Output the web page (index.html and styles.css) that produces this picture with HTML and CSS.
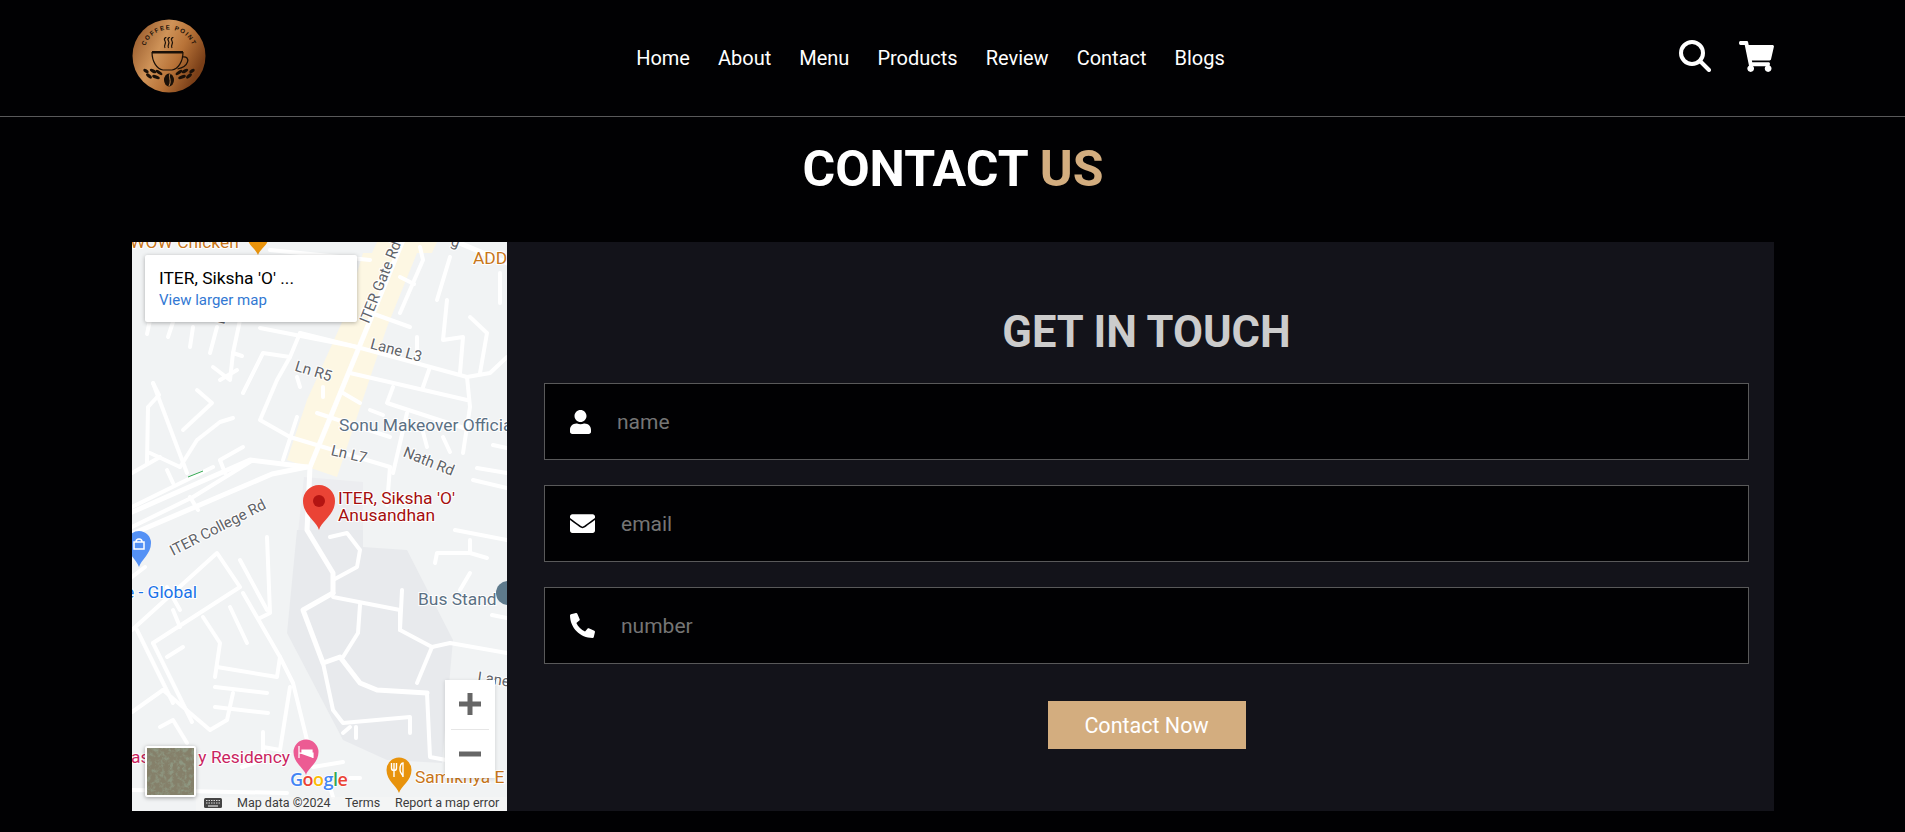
FILE: index.html
```html
<!DOCTYPE html>
<html lang="en">
<head>
<meta charset="utf-8">
<title>Coffee Point - Contact</title>
<link rel="stylesheet" href="styles.css">
</head>
<body>
<header class="site-header">
  <a class="logo" href="#" aria-label="Coffee Point">
    <svg class="logo-art" viewBox="0 0 74 74" width="74" height="74">
      <defs>
        <linearGradient id="copper" x1="0" y1="0" x2="1" y2="0.5">
          <stop offset="0" stop-color="#8a4d22"/>
          <stop offset="0.45" stop-color="#cf9358"/>
          <stop offset="0.7" stop-color="#b87338"/>
          <stop offset="1" stop-color="#7a3f18"/>
        </linearGradient>
        <path id="logoArc" d="M12 31 A25.500 25.500 0 0 1 62 31"/>
      </defs>
      <circle cx="37" cy="37" r="36.500" fill="url(#copper)"/>
      <text class="logo-text"><textPath href="#logoArc" startOffset="50%" text-anchor="middle">COFFEE POINT</textPath></text>
      <g class="logo-line">
        <path d="M33 29c-2-3 2-4 0-7s1-3 1-4M36.500 29c-2-3 2-4 0-7s1-3 1-4M40 29c-2-3 2-4 0-7s1-3 1-4"/>
        <path d="M20 33c0 10 5 17 11 18h9c6-1 11-8 11-18"/>
        <path d="M50 38c5-1 6.500 2 5.500 5s-5 6-10 7"/>
      </g>
      <path d="M20 32h31v2.500H20z" fill="#1a1008"/>
      <g fill="#1a1008">
        <ellipse cx="37" cy="61" rx="5" ry="6.500"/>
        <ellipse cx="14" cy="52" rx="3" ry="1.600" transform="rotate(30 14 52)"/>
        <ellipse cx="17" cy="57" rx="3.500" ry="1.600" transform="rotate(40 17 57)"/>
        <ellipse cx="21" cy="52" rx="3.500" ry="1.600" transform="rotate(30 21 52)"/>
        <ellipse cx="24" cy="58" rx="4" ry="1.700" transform="rotate(20 24 58)"/>
        <ellipse cx="27" cy="53.500" rx="4" ry="1.500" transform="rotate(35 27 53.500)"/>
        <ellipse cx="60" cy="52" rx="3" ry="1.600" transform="rotate(-30 60 52)"/>
        <ellipse cx="57" cy="57" rx="3.500" ry="1.600" transform="rotate(-40 57 57)"/>
        <ellipse cx="53" cy="52" rx="3.500" ry="1.600" transform="rotate(-30 53 52)"/>
        <ellipse cx="50" cy="58" rx="4" ry="1.700" transform="rotate(-20 50 58)"/>
        <ellipse cx="47" cy="53.500" rx="4" ry="1.500" transform="rotate(-35 47 53.500)"/>
      </g>
      <path d="M38 55c-2 3 2 6-1 12" fill="none" stroke="#c98a50" stroke-width="0.900"/>
    </svg>
  </a>
  <nav class="main-nav">
    <a href="#">Home</a>
    <a href="#">About</a>
    <a href="#">Menu</a>
    <a href="#">Products</a>
    <a href="#">Review</a>
    <a href="#">Contact</a>
    <a href="#">Blogs</a>
  </nav>
  <div class="header-icons">
    <svg class="icon-search" viewBox="0 0 32 32" width="32" height="32">
      <circle cx="13" cy="13" r="11" fill="none" stroke="#fff" stroke-width="4"/>
      <path d="M21 21l9 9" stroke="#fff" stroke-width="4" stroke-linecap="round"/>
    </svg>
    <svg class="icon-cart" viewBox="0 0 576 512" width="35" height="31">
      <path fill="#fff" d="M528.12 301.319l47.273-208C578.806 78.301 567.391 64 551.99 64H159.208l-9.166-44.81C147.758 8.021 137.93 0 126.529 0H24C10.745 0 0 10.745 0 24v16c0 13.255 10.745 24 24 24h69.883l70.248 343.435C147.325 417.1 136 435.222 136 456c0 30.928 25.072 56 56 56s56-25.072 56-56c0-15.674-6.447-29.835-16.824-40h209.647C430.447 426.165 424 440.326 424 456c0 30.928 25.072 56 56 56s56-25.072 56-56c0-22.172-12.888-41.332-31.579-50.405l5.517-24.276c3.413-15.018-8.002-29.319-23.403-29.319H218.117l-6.545-32h293.145c11.206 0 20.92-7.754 23.403-18.681z"/>
    </svg>
  </div>
</header>

<main class="contact">
  <h1 class="page-title">CONTACT <span class="accent">US</span></h1>
  <div class="contact-row">
    <div class="map">
      <svg class="map-art" viewBox="0 0 375 569" width="375" height="569">
        <rect class="m-bg" width="375" height="569"/>
        <polygon class="m-campus-light" points="172,235 231,240 231,310 165,300"/>
        <polygon class="m-campus" points="165,288 155,391 211,498 255,518 310,521 321,398 275,308 231,305 231,288"/>
        <polygon class="m-market" points="231,11 285,11 255,85 205,235 155,218 175,158 211,78"/>
        <polygon class="m-market" points="245,0 305,0 300,11 240,11"/>
        <g class="m-road">
          <polyline points="128,86 225,105 335,135"/>
          <polyline points="218,131 335,158"/>
          <polyline points="168,91 158,115 131,111 111,151"/>
          <polyline points="168,91 225,105"/>
          <polyline points="158,115 145,138 128,178 158,195 258,225"/>
          <polyline points="165,175 151,218"/>
          <polyline points="335,135 338,165 331,211"/>
          <polyline points="298,125 291,145"/>
          <polyline points="261,145 255,161 338,188"/>
          <polyline points="185,171 258,195"/>
          <polyline points="21,141 27,153 16,165 15,221"/>
          <polyline points="21,141 55,231"/>
          <polyline points="65,148 80,161 51,188"/>
          <polyline points="101,176 88,180 65,198 48,225"/>
          <polyline points="18,211 48,225"/>
          <polyline points="35,228 41,241"/>
          <polyline points="58,255 66,268"/>
          <polyline points="0,231 28,215"/>
          <polyline points="0,265 81,225"/>
          <polyline points="121,218 61,255 0,285"/>
          <polyline points="88,218 111,205"/>
          <polyline points="88,218 93,231"/>
          <polyline points="18,78 15,92"/>
          <polyline points="41,80 36,95"/>
          <polyline points="61,85 58,105"/>
          <polyline points="85,85 78,111"/>
          <polyline points="108,78 101,111 98,138 81,125"/>
          <polyline points="88,138 105,128"/>
          <polyline points="101,111 110,114"/>
          <polyline points="315,58 311,98 331,95 328,131"/>
          <polyline points="338,75 355,91 348,131"/>
          <polyline points="375,115 358,131 335,135"/>
          <polyline points="288,5 291,18 268,71"/>
          <polyline points="318,15 305,58"/>
          <polyline points="368,31 368,61"/>
          <polyline points="138,8 238,18"/>
          <polyline points="231,68 278,85"/>
          <polyline points="268,35 282,42"/>
          <polyline points="165,135 168,145"/>
          <polyline points="191,145 191,155"/>
          <polyline points="211,151 228,161"/>
          <polyline points="285,95 285,115"/>
          <polyline points="238,168 251,173"/>
          <polyline points="291,190 295,205"/>
          <polyline points="311,195 318,210"/>
          <polyline points="258,225 255,263"/>
          <polyline points="275,171 261,231"/>
          <polyline points="345,226 375,231"/>
          <polyline points="341,238 375,246"/>
          <polyline points="361,203 375,206"/>
          <polyline points="323,288 375,298"/>
          <polyline points="338,298 338,311 305,311 303,321"/>
          <polyline points="338,311 355,316"/>
          <polyline points="338,331 328,348"/>
          <polyline points="360,373 375,376"/>
          <polyline points="135,295 138,371 128,376"/>
          <polyline points="108,318 135,368"/>
          <polyline points="0,388 85,311 108,345 21,401"/>
          <polyline points="13,325 0,335"/>
          <polyline points="35,345 48,368"/>
          <polyline points="98,365 115,401"/>
          <polyline points="71,375 88,401 83,435"/>
          <polyline points="85,425 145,435 148,415"/>
          <polyline points="111,351 148,415 161,441 175,498"/>
          <polyline points="158,445 148,508"/>
          <polyline points="83,445 135,451"/>
          <polyline points="83,465 136,471"/>
          <polyline points="101,451 95,478 78,488 31,448"/>
          <polyline points="5,388 41,461"/>
          <polyline points="21,401 60,480"/>
          <polyline points="35,415 51,405"/>
          <polyline points="41,368 48,385"/>
          <polyline points="28,485 41,478 55,501"/>
          <polyline points="0,470 31,448"/>
          <polyline points="110,525 131,518 131,490"/>
          <polyline points="131,505 148,508"/>
          <polyline points="181,525 211,520"/>
          <polyline points="198,545 201,555"/>
          <polyline points="218,536 228,536"/>
          <polyline points="0,548 155,551"/>
          <polyline points="201,355 268,368 268,388 300,405 285,441"/>
          <polyline points="270,348 268,388"/>
          <polyline points="228,363 226,391 211,415"/>
          <polyline points="300,405 318,401 375,411"/>
          <polyline points="198,295 215,291 228,308 225,325 201,338"/>
          <polyline points="191,421 201,468 211,481 278,475 278,491"/>
          <polyline points="218,485 211,491"/>
          <polyline points="224,485 224,496"/>
          <polyline points="295,451 298,515 325,520"/>
        </g>
        <g class="m-road-wide">
          <polyline points="271,-2 178,225 175,288 201,331 201,351"/>
          <polyline points="325,0 375,21"/>
          <polyline points="-2,271 118,218 175,225"/>
          <polyline points="0,292 140,232 175,225"/>
          <polyline points="201,351 171,368 191,421 208,415 228,441 245,448 295,451"/>
        </g>
        <path class="m-green" d="M56 235l15-6"/>

        <text class="t-poi-orange" x="-2" y="6">WOW Chicken</text>
        <text class="t-poi-orange" x="341" y="22">ADD</text>
        <text class="t-road" transform="translate(253 42) rotate(-68)" text-anchor="middle">ITER Gate Rd</text>
        <text class="t-road" transform="translate(263 113) rotate(15)" text-anchor="middle">Lane L3</text>
        <text class="t-road" transform="translate(180 134) rotate(17)" text-anchor="middle">Ln R5</text>
        <text class="t-road" transform="translate(216 217) rotate(13)" text-anchor="middle">Ln L7</text>
        <text class="t-road" transform="translate(295 224) rotate(22)" text-anchor="middle">Nath Rd</text>
        <text class="t-road" transform="translate(88 290) rotate(-27)" text-anchor="middle">ITER College Rd</text>
        <text class="t-road" transform="translate(318 3) rotate(20)">g</text>
        <text class="t-road" transform="translate(92 83) rotate(-75)">L</text>
        <text class="t-road" transform="translate(345 440) rotate(8)">Lane</text>
        <text class="t-place" x="207" y="189">Sonu Makeover Official</text>
        <text class="t-place" x="286" y="363">Bus Stand</text>
        <text class="t-blue" x="65" y="356" text-anchor="end">e - Global</text>
        <text class="t-pink" x="-1" y="521">as</text>
        <text class="t-pink" x="158" y="521" text-anchor="end">y Residency</text>
        <text class="t-poi-orange" x="283" y="541">Samikhya E</text>
        <text class="t-red" x="206" y="262">ITER, Siksha 'O'</text>
        <text class="t-red" x="206" y="279">Anusandhan</text>

        <path class="pin-orange" d="M126 13c-2-6-10-10-10-16a10 10 0 0 1 20 0c0 6-8 10-10 16z"/>
        <path class="pin-blue" d="M7 325c-2-7-12-13-12-24a12 12 0 0 1 24 0c0 11-10 17-12 24z"/>
        <path d="M2 300h10v7H2zM4 300a3 3 0 0 1 6 0" fill="none" stroke="#fff" stroke-width="1.500"/>
        <circle class="pin-slate" cx="376" cy="351" r="12"/>
        <path class="pin-pink" d="M174 533c-2-7-12.500-12-12.500-23a12.500 12.500 0 0 1 25 0c0 11-10.500 16-12.500 23z"/>
        <path d="M167 504v12M167 511h14v5M170 508h10v3h-10z" fill="#fff" stroke="#fff" stroke-width="1.200"/>
        <path class="pin-amber" d="M267 551c-2-7-12.500-12-12.500-23a12.500 12.500 0 0 1 25 0c0 11-10.500 16-12.500 23z"/>
        <path d="M262 521v14M259.500 521v5a2.500 2.500 0 0 0 5 0v-5M271 521v14c0-3-3-3-3-7s1-7 3-7z" fill="none" stroke="#fff" stroke-width="1.400"/>
        <path class="pin-red" d="M187 288c-2.500-9-16-15-16-29a16 16 0 0 1 32 0c0 14-13.500 20-16 29z"/>
        <circle class="pin-red-dot" cx="187" cy="259" r="6"/>

        <text class="t-google" x="158" y="544"><tspan fill="#4285f4">G</tspan><tspan fill="#ea4335">o</tspan><tspan fill="#fbbc04">o</tspan><tspan fill="#4285f4">g</tspan><tspan fill="#34a853">l</tspan><tspan fill="#ea4335">e</tspan></text>

        <rect class="m-attrib" x="64" y="555" width="311" height="14"/>
        <g class="m-key">
          <rect x="72" y="556" width="18" height="10" rx="1.500"/>
          <path d="M74 558.500h14M74 561h14" stroke="#fff" stroke-width="0.800" stroke-dasharray="1.500 1"/>
          <path d="M76 564h10" stroke="#fff" stroke-width="1"/>
        </g>
        <text class="t-attrib" x="105" y="565">Map data ©2024</text>
        <text class="t-attrib" x="213" y="565">Terms</text>
        <text class="t-attrib" x="263" y="565">Report a map error</text>
      </svg>

      <div class="map-card">
        <div class="map-card-title">ITER, Siksha 'O' ...</div>
        <a class="map-card-link" href="#">View larger map</a>
      </div>

      <div class="map-thumb">
        <svg viewBox="0 0 48 48" width="47" height="47">
          <filter id="grain" x="0" y="0" width="100%" height="100%"><feTurbulence type="fractalNoise" baseFrequency="0.22" numOctaves="4" seed="7"/><feColorMatrix values="0 0 0 0 0.27  0 0 0 0 0.31  0 0 0 0 0.22  2.400 2.400 0 0 -2.200"/></filter>
          <rect width="48" height="48" fill="#85806a"/>
          <rect width="48" height="48" filter="url(#grain)"/>
        </svg>
      </div>

      <div class="map-zoom">
        <button class="map-zoom-btn" aria-label="Zoom in">
          <svg viewBox="0 0 24 24" width="24" height="24"><path d="M9.500 1h5v8.500H23v5h-8.500V23h-5v-8.500H1v-5h8.500z" fill="#666"/></svg>
        </button>
        <div class="map-zoom-sep"></div>
        <button class="map-zoom-btn" aria-label="Zoom out">
          <svg viewBox="0 0 24 24" width="24" height="24"><path d="M1 9.500h22v5H1z" fill="#666"/></svg>
        </button>
      </div>
    </div>

    <form class="touch-form">
      <h2 class="touch-title">GET IN TOUCH</h2>
      <label class="field">
        <svg class="field-icon" viewBox="0 0 448 512" width="21" height="24"><path fill="#fff" d="M224 256c70.700 0 128-57.300 128-128S294.700 0 224 0 96 57.300 96 128s57.300 128 128 128zm89.600 32h-16.700c-22.200 10.200-46.900 16-72.900 16s-50.600-5.800-72.900-16h-16.700C60.200 288 0 348.200 0 422.400V464c0 26.500 21.500 48 48 48h352c26.500 0 48-21.500 48-48v-41.600c0-74.200-60.200-134.400-134.400-134.400z"/></svg>
        <input class="field-input" type="text" placeholder="name">
      </label>
      <label class="field">
        <svg class="field-icon" viewBox="0 0 512 512" width="25" height="25"><path fill="#fff" d="M502.300 190.800c3.900-3.100 9.700-.2 9.700 4.700V400c0 26.500-21.500 48-48 48H48c-26.500 0-48-21.500-48-48V195.600c0-5 5.700-7.800 9.700-4.700 22.400 17.400 52.100 39.500 154.100 113.600 21.100 15.400 56.700 47.800 92.200 47.600 35.700.3 72-32.800 92.300-47.600 102-74.100 131.600-96.300 154-113.700zM256 320c23.200.4 56.600-29.200 73.400-41.400 132.700-96.300 142.800-104.700 173.400-128.700 5.800-4.500 9.200-11.500 9.200-18.900v-19c0-26.500-21.500-48-48-48H48C21.500 64 0 85.500 0 112v19c0 7.400 3.400 14.300 9.200 18.900 30.600 23.900 40.700 32.400 173.400 128.700 16.800 12.200 50.200 41.800 73.400 41.400z"/></svg>
        <input class="field-input" type="email" placeholder="email">
      </label>
      <label class="field">
        <svg class="field-icon" viewBox="0 0 512 512" width="25" height="25"><g transform="translate(512 0) scale(-1 1)"><path fill="#fff" d="M493.400 24.600l-104-24c-11.300-2.600-22.900 3.300-27.500 13.900l-48 112c-4.200 9.800-1.400 21.300 6.900 28l60.600 49.600c-36 76.700-98.900 140.500-177.200 177.200l-49.600-60.600c-6.800-8.300-18.200-11.100-28-6.900l-112 48C3.900 366.500-2 378.100.6 389.400l24 104C27.100 504.200 36.700 512 48 512c256.100 0 464-207.500 464-464 0-11.200-7.700-20.900-18.600-23.400z"/></g></svg>
        <input class="field-input" type="tel" placeholder="number">
      </label>
      <button class="contact-btn" type="button">Contact Now</button>
    </form>
  </div>
</main>
</body>
</html>
```

FILE: styles.css
```css
* { box-sizing: border-box; }

html, body { margin: 0; padding: 0; }

body {
  background: #010103;
  color: #fff;
  font-family: Roboto, "Liberation Sans", sans-serif;
}

a { color: inherit; text-decoration: none; }

.site-header {
  display: flex;
  align-items: center;
  justify-content: space-between;
  height: 117px;
  padding: 0 131px 0 132px;
  border-bottom: 1px solid rgba(255, 255, 255, 0.35);
}

.logo { display: block; width: 74px; height: 74px; margin-bottom: 4px; }
.logo-art { display: block; }
.logo-text { font: 700 6.200px "Liberation Sans", sans-serif; letter-spacing: 1.300px; fill: #1a1008; }
.logo-line { fill: none; stroke: #1a1008; stroke-width: 1.200; }

.main-nav { display: flex; gap: 28px; margin-right: 24px; font-size: 20px; }
.main-nav a { color: #fff; }

.header-icons { display: flex; align-items: center; gap: 28px; margin-bottom: 4px; }
.icon-search, .icon-cart { display: block; }

.contact { padding: 0 131px 21px 132px; }

.page-title {
  margin: 0;
  height: 125px;
  padding-top: 19px;
  text-align: center;
  font-size: 50px;
  line-height: 66px;
  font-weight: 700;
  color: #fff;
}
.accent { color: #d3ad7f; }

.contact-row { display: flex; height: 569px; }

.map { position: relative; flex: 0 0 375px; height: 569px; overflow: hidden; }
.map-art { display: block; font-family: Roboto, sans-serif; }

.m-bg { fill: #f1f3f4; }
.m-campus { fill: #e8eaed; }
.m-campus-light { fill: #ecedf0; }
.m-market { fill: #fdf7e3; }
.m-road polyline { fill: none; stroke: #fff; stroke-width: 4; stroke-linecap: round; stroke-linejoin: round; }
.m-road-wide polyline { fill: none; stroke: #fff; stroke-width: 5; stroke-linecap: round; stroke-linejoin: round; }
.m-green { stroke: #34a853; stroke-width: 1; fill: none; }
.m-attrib { fill: #f5f5f5; fill-opacity: 0.7; }
.m-key rect { fill: #444; }

.t-road { font-size: 15px; fill: #5f6368; stroke: #fff; stroke-width: 2px; paint-order: stroke; }
.t-place { font-size: 17.400px; fill: #5b7083; stroke: #fff; stroke-width: 2px; paint-order: stroke; }
.t-blue { font-size: 17.400px; fill: #1a73e8; stroke: #fff; stroke-width: 2px; paint-order: stroke; }
.t-pink { font-size: 17.400px; fill: #c9245f; stroke: #fff; stroke-width: 2px; paint-order: stroke; }
.t-poi-orange { font-size: 17.400px; fill: #c8761a; stroke: #fff; stroke-width: 2px; paint-order: stroke; }
.t-red { font-size: 17.400px; fill: #a50e0e; stroke: #fff; stroke-width: 2px; paint-order: stroke; }
.t-attrib { font-size: 12.500px; fill: #3c3c3c; }
.t-google { font-family: "Open Sans", sans-serif; font-size: 18px; font-weight: 600; letter-spacing: -0.500px; stroke: #fff; stroke-width: 1.500px; paint-order: stroke; }

.pin-orange, .pin-amber { fill: #e8930c; }
.pin-blue { fill: #5491f5; }
.pin-slate { fill: #5e7a8c; }
.pin-pink { fill: #ec5b93; }
.pin-red { fill: #ea4335; }
.pin-red-dot { fill: #b31412; }

.map-card {
  position: absolute;
  left: 13px;
  top: 13px;
  width: 212px;
  height: 67px;
  padding: 13px 14px;
  background: #fff;
  border-radius: 2px;
  box-shadow: 0 1px 4px rgba(0, 0, 0, 0.3);
}
.map-card-title { font-size: 17.400px; line-height: 20px; color: #000; font-weight: 400; }
.map-card-link { display: block; margin-top: 3px; font-size: 15px; line-height: 18px; color: #3278d3; }

.map-thumb {
  position: absolute;
  left: 13px;
  top: 504px;
  width: 51px;
  height: 51px;
  border: 2px solid #fff;
  border-radius: 2px;
  background: #71745e;
  box-shadow: 0 1px 4px rgba(0, 0, 0, 0.35);
  overflow: hidden;
}
.map-thumb svg { display: block; }

.map-zoom {
  position: absolute;
  left: 313px;
  top: 438px;
  width: 50px;
  height: 98px;
  background: #fff;
  box-shadow: 0 1px 4px rgba(0, 0, 0, 0.15);
  display: flex;
  flex-direction: column;
  align-items: center;
}
.map-zoom-btn {
  flex: 1;
  width: 100%;
  padding: 0;
  border: 0;
  background: transparent;
  display: flex;
  align-items: center;
  justify-content: center;
}
.map-zoom-sep { width: 38px; height: 1px; background: #e6e6e6; }

.touch-form {
  flex: 1;
  background: #13131a;
  padding: 0 25px 0 37px;
  display: flex;
  flex-direction: column;
  align-items: stretch;
}

.touch-title {
  margin: 0;
  height: 141px;
  padding-top: 63px;
  text-align: center;
  font-size: 43.500px;
  line-height: 56px;
  font-weight: 700;
  color: #ccc;
}

.field {
  display: flex;
  align-items: center;
  gap: 26px;
  height: 77px;
  margin-bottom: 25px;
  padding-left: 25px;
  background: #010103;
  border: 1px solid rgba(255, 255, 255, 0.35);
}
.field-icon { flex: none; display: block; }
.field-input {
  flex: 1;
  min-width: 0;
  padding: 0;
  border: 0;
  outline: 0;
  background: transparent;
  color: #fff;
  font-family: Roboto, sans-serif;
  font-size: 21px;
}
.field-input::placeholder { color: #757575; opacity: 1; }

.contact-btn {
  align-self: center;
  width: 198px;
  height: 48px;
  margin-top: 12px;
  padding-top: 2px;
  border: 0;
  background: #d3ad7f;
  color: #fff;
  font-family: Roboto, sans-serif;
  font-size: 21.500px;
}
```
